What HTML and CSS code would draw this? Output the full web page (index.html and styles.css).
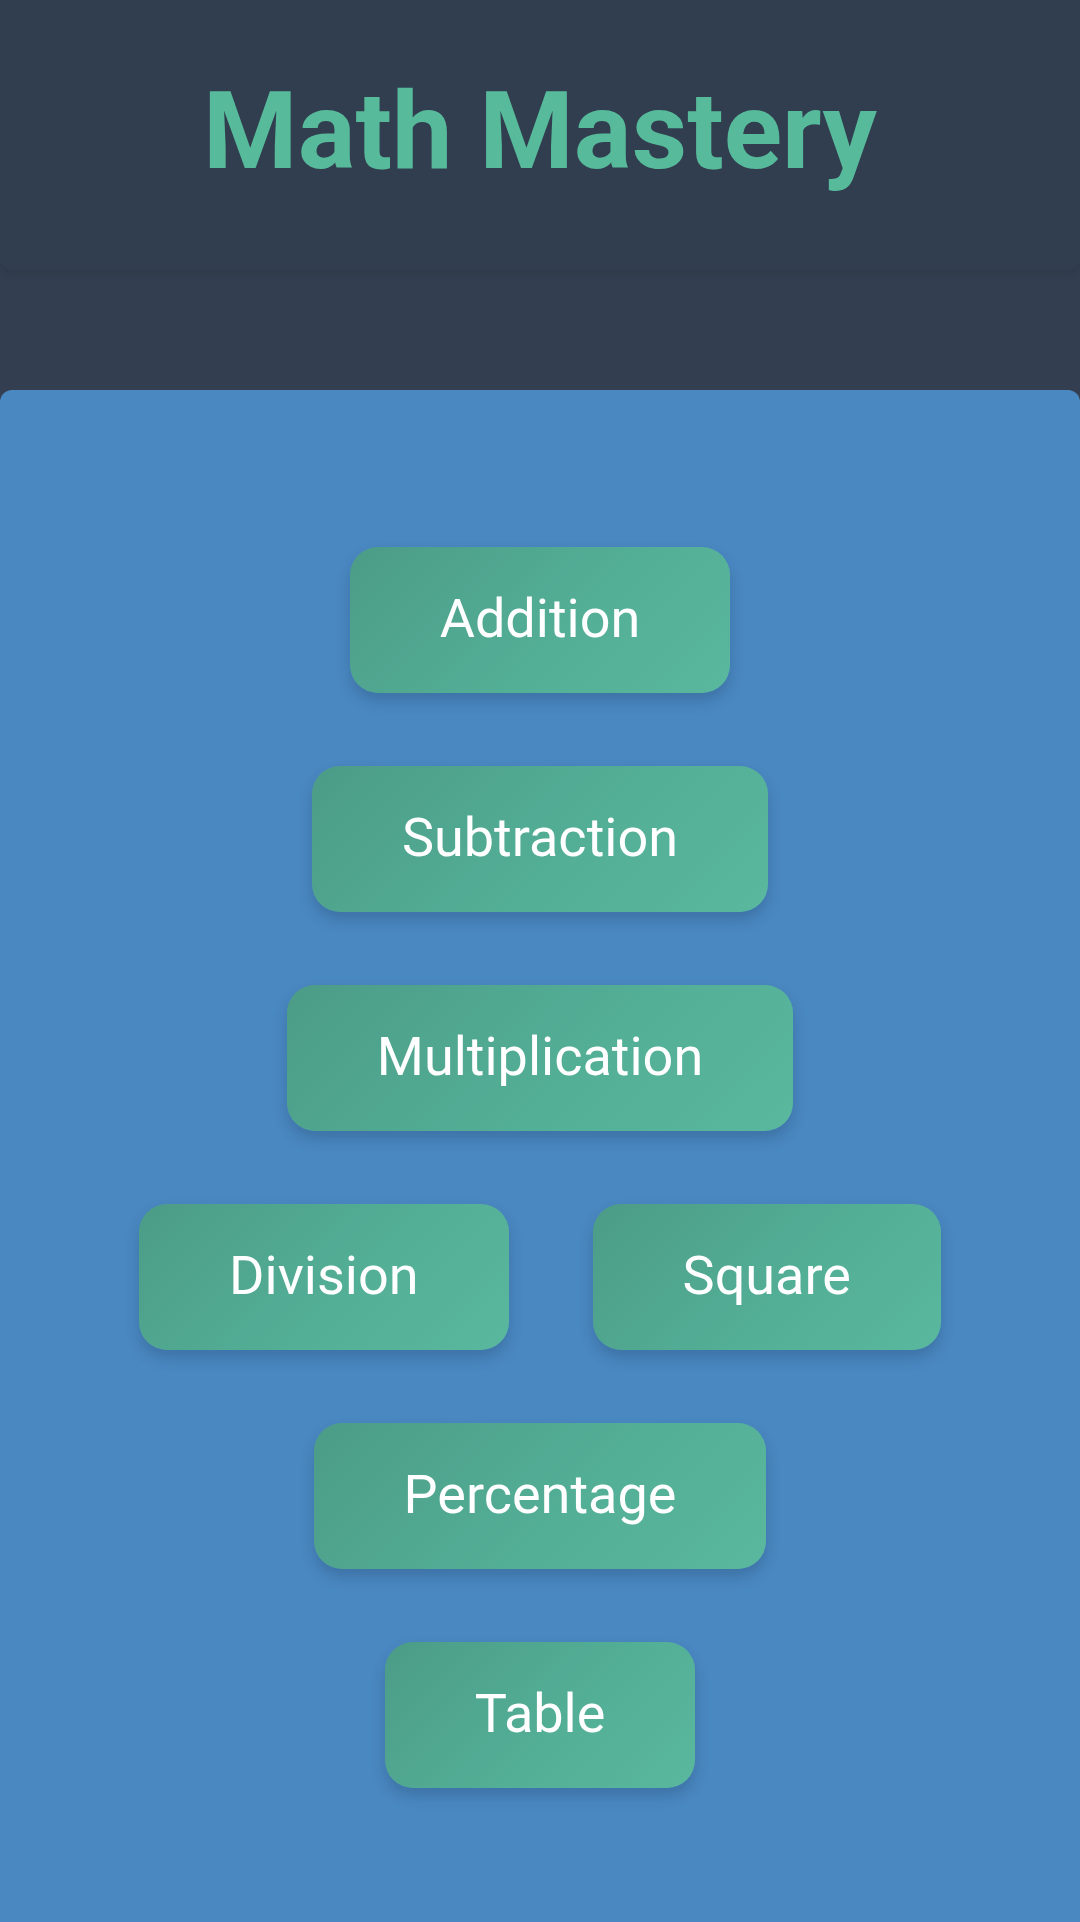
FILE: index.html
```html
<!DOCTYPE html>
<html>
<head>
<meta charset="utf-8">
<link rel="stylesheet" href="styles.css">
</head>
<body>
<header class="top">
  <h1 class="title">Math Mastery</h1>
</header>
<div class="strip"></div>
<main class="panel">
  <div class="row"><button class="btn">Addition</button></div>
  <div class="row"><button class="btn">Subtraction</button></div>
  <div class="row"><button class="btn">Multiplication</button></div>
  <div class="row pair"><button class="btn">Division</button><button class="btn">Square</button></div>
  <div class="row"><button class="btn">Percentage</button></div>
  <div class="row"><button class="btn">Table</button></div>
</main>
</body>
</html>
```
FILE: styles.css
```css
html, body {
  margin: 0;
  padding: 0;
  background: #333f51;
  font-family: Roboto, "Liberation Sans", sans-serif;
}
.top {
  height: 270px;
  box-sizing: border-box;
  background: #313e50;
  border-radius: 0 0 10px 10px;
  box-shadow: 0 3px 6px rgba(0,0,0,0.12);
  display: flex;
  justify-content: center;
  padding-top: 68px;
  position: relative;
}
.title {
  margin: 0;
  font-size: 108px;
  font-weight: 700;
  line-height: normal;
  color: #57ba9a;
}
.strip {
  height: 120px;
}
.panel {
  background: #4a88c2;
  border-radius: 12px 12px 0 0;
  min-height: 1532px;
  box-sizing: border-box;
  padding-top: 157px;
  display: flex;
  flex-direction: column;
  align-items: center;
  gap: 73px;
}
.row {
  display: flex;
  justify-content: center;
  gap: 84px;
}
.btn {
  height: 146px;
  box-sizing: border-box;
  padding: 40px 90px 43px;
  border: none;
  border-radius: 28px;
  background: linear-gradient(135deg, #4c9c87 0%, #53ae96 55%, #59b89d 100%);
  box-shadow: 0 8px 14px rgba(20,40,70,0.22);
  color: #ffffff;
  font-family: Roboto, "Liberation Sans", sans-serif;
  font-size: 54px;
  font-weight: 400;
  line-height: normal;
}
```
